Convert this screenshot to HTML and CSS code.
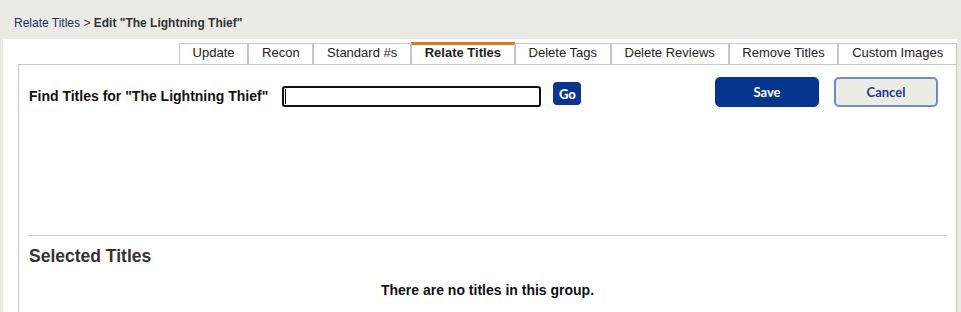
FILE: index.html
```html
<!DOCTYPE html>
<html lang="en">
<head>
<meta charset="utf-8">
<title>Edit "The Lightning Thief"</title>
<link rel="stylesheet" href="styles.css">
</head>
<body>
<header class="crumbs">
  <a class="crumb-link" href="#">Relate Titles</a> <span class="crumb-sep">&gt;</span> <strong class="crumb-current">Edit "The Lightning Thief"</strong>
</header>
<main class="content">
  <nav class="tabs">
    <a class="tab" href="#">Update</a>
    <a class="tab" href="#">Recon</a>
    <a class="tab" href="#">Standard #s</a>
    <a class="tab tab-active" href="#">Relate Titles</a>
    <a class="tab" href="#">Delete Tags</a>
    <a class="tab" href="#">Delete Reviews</a>
    <a class="tab" href="#">Remove Titles</a>
    <a class="tab" href="#">Custom Images</a>
  </nav>
  <section class="panel">
    <div class="find-area">
      <div class="find-row">
        <div class="find-group">
          <label class="find-label" for="find">Find Titles for "The Lightning Thief"</label>
          <span class="field"><input id="find" class="find-input" type="text"><span class="caret"></span></span>
          <button class="go-btn" type="button">Go</button>
        </div>
        <div class="actions">
          <button class="btn btn-save" type="button">Save</button>
          <button class="btn btn-cancel" type="button">Cancel</button>
        </div>
      </div>
    </div>
    <h2 class="section-title">Selected Titles</h2>
    <p class="empty">There are no titles in this group.</p>
  </section>
</main>
</body>
</html>
```
FILE: styles.css
```css
* { box-sizing: border-box; }

html, body {
  margin: 0;
  padding: 0;
}

body {
  background: #ebebe6;
  font-family: "Liberation Sans", Arial, sans-serif;
  color: #222;
  height: 312px;
  overflow: hidden;
}

.crumbs {
  height: 39px;
  padding: 16px 0 0 14px;
  font-size: 12px;
  line-height: 14px;
  color: #333;
}

.crumb-link {
  color: #1b2a6b;
  text-decoration: none;
}

.crumb-sep {
  color: #333;
}

.crumb-current {
  font-weight: bold;
  color: #333;
}

.content {
  background: #fff;
  margin: 0 4px 0 3px;
  height: calc(100% - 39px);
  padding-top: 4px;
}

.tabs {
  display: flex;
  justify-content: flex-end;
}

.tab {
  display: block;
  border: 1px solid #c6c6c6;
  border-bottom: none;
  padding: 0 12.75px 3px;
  height: 21px;
  line-height: 17px;
  font-size: 13px;
  color: #222;
  text-decoration: none;
  white-space: nowrap;
}

.tab-active {
  margin-top: -1px;
  height: 22px;
  border-top: 3px solid #e2761b;
  font-weight: bold;
  line-height: 15px;
  padding-bottom: 4px;
}

.panel {
  margin-left: 15px;
  border: 1px solid #c8c8c8;
  border-bottom: none;
  padding: 12px 10px 0 10px;
  height: 260px;
}

.find-area {
  height: 159px;
  border-bottom: 1px solid #cccccc;
  margin-left: -1px;
}

.find-row {
  display: flex;
  justify-content: space-between;
  align-items: flex-start;
}

.find-group {
  display: flex;
  align-items: flex-start;
  padding-left: 1px;
}

.find-label {
  margin-top: 9px;
  font-size: 14px;
  font-weight: bold;
  line-height: 21px;
  color: #111;
  white-space: nowrap;
}

.field {
  position: relative;
  display: block;
  margin-top: 9px;
  margin-left: 14px;
}

.find-input {
  display: block;
  width: 259px;
  height: 21px;
  border: 2px solid #111;
  border-radius: 3px;
  background: #fff;
  outline: none;
  padding: 0 3px;
  font-family: "Liberation Sans", Arial, sans-serif;
  font-size: 13px;
}

.caret {
  position: absolute;
  left: 3px;
  top: 3px;
  width: 1px;
  height: 15px;
  background: #000;
}

.go-btn {
  margin-top: 5px;
  margin-left: 12px;
  width: 28px;
  height: 23px;
  border: none;
  border-radius: 4px;
  background: #0a3592;
  color: #fff;
  font-family: Lato, "Open Sans", sans-serif;
  font-weight: 900;
  font-size: 13px;
  padding: 0;
}

.actions {
  display: flex;
  gap: 15px;
  margin-right: 8px;
}

.btn {
  width: 104px;
  height: 30px;
  border-radius: 5px;
  font-family: Lato, "Open Sans", sans-serif;
  font-weight: bold;
  font-size: 13px;
  padding: 0;
}

.btn-save {
  background: #04358f;
  border: 1px solid #04358f;
  color: #fff;
}

.btn-cancel {
  background: #ecece7;
  border: 2px solid #6e8dbf;
  color: #1f3c86;
}

.section-title {
  margin: 10px 0 0 0;
  font-size: 17.5px;
  line-height: 20px;
  font-weight: bold;
  color: #333;
}

.empty {
  margin: 16px 0 0 0;
  text-align: center;
  font-size: 14px;
  line-height: 16px;
  font-weight: bold;
  color: #111;
}
```
